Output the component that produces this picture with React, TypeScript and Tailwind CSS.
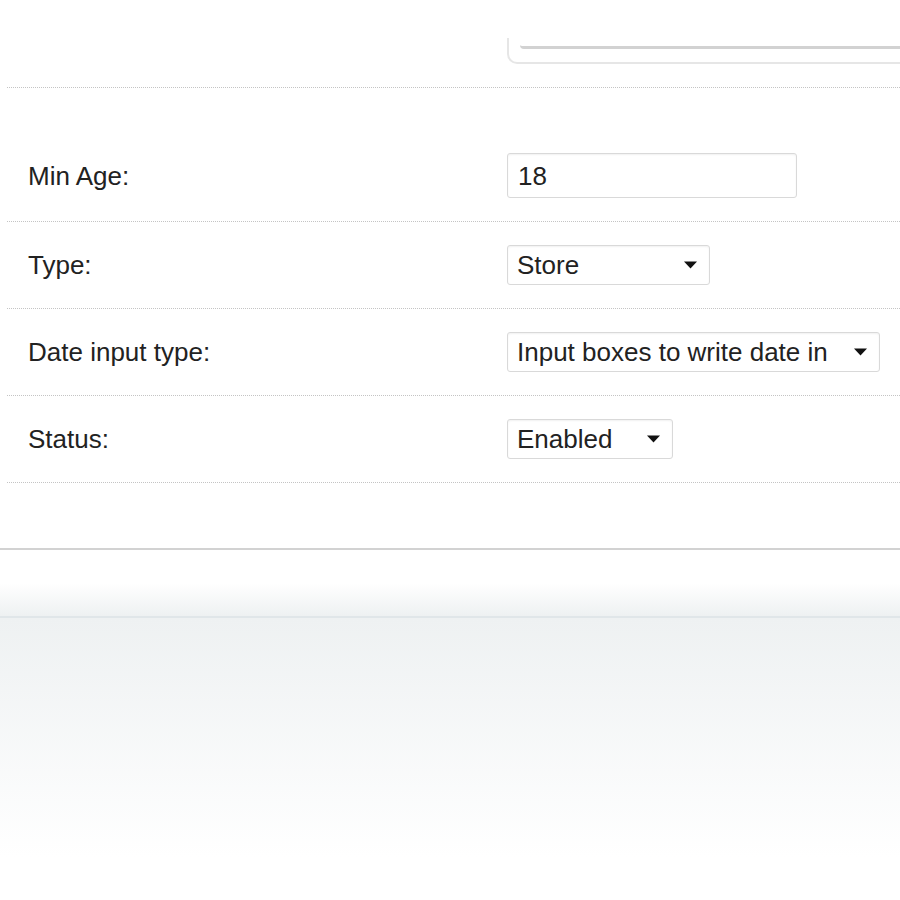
import React from "react";

function Arrow() {
  return (
    <svg width="13" height="8" viewBox="0 0 13 8" className="shrink-0">
      <path d="M0 0.5 L13 0.5 L6.5 7.5 Z" fill="#111" />
    </svg>
  );
}

function Select({ value, width }: { value: string; width: string }) {
  return (
    <div
      className={`flex h-[40px] items-center justify-between rounded-[3px] border border-[#d9d9d9] bg-white pl-[9px] pr-[12px] shadow-[inset_0_1px_2px_rgba(0,0,0,0.06)] ${width}`}
    >
      <span className="text-[26px] leading-none text-[#222]">{value}</span>
      <Arrow />
    </div>
  );
}

function Row({
  label,
  children,
  extraTop,
}: {
  label: string;
  children: React.ReactNode;
  extraTop?: boolean;
}) {
  return (
    <div
      className={`flex items-center border-b border-dotted border-[#c4c4c4] ${
        extraTop ? "h-[134px] pt-[42px]" : "h-[87px]"
      }`}
    >
      <div className="w-[500px] pl-[21px] text-[26px] leading-none text-[#222]">
        {label}
      </div>
      <div className="flex-1">{children}</div>
    </div>
  );
}

export default function App() {
  return (
    <div
      className="min-h-[900px] w-[900px] overflow-hidden bg-white"
      style={{ fontFamily: '"Liberation Sans", Arial, sans-serif' }}
    >
      <div className="border-b-2 border-[#d2d2d2] bg-white pb-[65px]">
        <div className="ml-[7px]">
          <div className="flex h-[88px] flex-col border-b border-dotted border-[#c4c4c4]">
            <div className="ml-[500px] mt-[38px] h-[26px] rounded-bl-[10px] border-b-2 border-l-2 border-[#e6e6e6]">
              <div className="ml-[11px] mt-[7px] h-[4px] rounded-bl-[4px] border-b-[3px] border-[#d2d2d2]" />
            </div>
          </div>
          <Row label="Min Age:" extraTop>
            <div className="flex h-[45px] w-[290px] items-center rounded-[3px] border border-[#d9d9d9] bg-white pl-[10px] shadow-[inset_0_1px_2px_rgba(0,0,0,0.06)]">
              <span className="text-[26px] leading-none text-[#222]">18</span>
            </div>
          </Row>
          <Row label="Type:">
            <Select value="Store" width="w-[203px]" />
          </Row>
          <Row label="Date input type:">
            <Select value="Input boxes to write date in" width="w-[373px]" />
          </Row>
          <Row label="Status:">
            <Select value="Enabled" width="w-[166px]" />
          </Row>
        </div>
      </div>
      <div className="h-[66px] bg-gradient-to-b from-white via-white to-[#eef1f2]" />
      <div className="h-[2px] bg-[#e0e6e9]" />
      <div className="h-[240px] bg-gradient-to-b from-[#eef1f2] to-white" />
    </div>
  );
}
